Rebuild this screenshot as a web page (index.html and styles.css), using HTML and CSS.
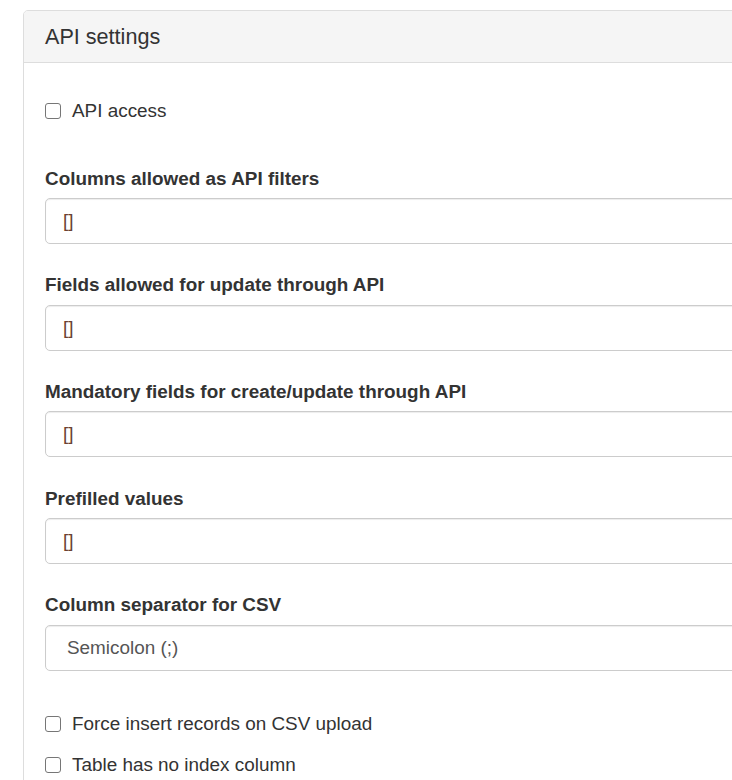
FILE: index.html
```html
<!DOCTYPE html>
<html lang="en">
<head>
<meta charset="utf-8">
<title>API settings</title>
<link rel="stylesheet" href="styles.css">
</head>
<body>
<div class="page">
  <div class="panel">
    <div class="panel-heading">
      <h3 class="panel-title">API settings</h3>
    </div>
    <div class="panel-body">
      <label class="check first-check"><input type="checkbox"> API access</label>

      <div class="form-group">
        <label class="field-label">Columns allowed as API filters</label>
        <input class="form-control code" type="text" value="[]">
      </div>
      <div class="form-group">
        <label class="field-label">Fields allowed for update through API</label>
        <input class="form-control code" type="text" value="[]">
      </div>
      <div class="form-group">
        <label class="field-label">Mandatory fields for create/update through API</label>
        <input class="form-control code" type="text" value="[]">
      </div>
      <div class="form-group">
        <label class="field-label">Prefilled values</label>
        <input class="form-control code" type="text" value="[]">
      </div>
      <div class="form-group">
        <label class="field-label">Column separator for CSV</label>
        <select class="form-control select">
          <option>Semicolon (;)</option>
          <option>Comma (,)</option>
        </select>
      </div>

      <label class="check after-select"><input type="checkbox"> Force insert records on CSV upload</label>
      <label class="check next-check"><input type="checkbox"> Table has no index column</label>
    </div>
  </div>
</div>
</body>
</html>
```
FILE: styles.css
```css
html, body {
  margin: 0;
  padding: 0;
  overflow: hidden;
  background: #fff;
}

body {
  font-family: "Liberation Sans", Arial, Helvetica, sans-serif;
  font-size: 18.9px;
  color: #333;
}

.page {
  padding: 10px 0 0 23px;
}

.panel {
  width: 780px;
  border: 1px solid #ddd;
  border-radius: 5px;
  background: #fff;
}

.panel-heading {
  background: #f5f5f5;
  border-bottom: 1px solid #ddd;
  border-radius: 4px 4px 0 0;
  padding: 13.5px 20px 13.5px 21px;
}

.panel-title {
  margin: 0;
  font-size: 21.6px;
  font-weight: normal;
  line-height: 24px;
  color: #333;
}

.panel-body {
  padding: 33.5px 20px 20px 21px;
}

.check {
  display: flex;
  align-items: center;
  height: 27px;
  line-height: 27px;
  font-weight: normal;
  cursor: pointer;
}

.check input {
  appearance: none;
  -webkit-appearance: none;
  width: 16px;
  height: 16px;
  margin: 1px 11px 0 0;
  border: 1px solid #767676;
  border-radius: 3px;
  background: #fff;
  flex: none;
}

.first-check {
  margin-bottom: 41px;
}

.after-select {
  margin-top: 39.5px;
}

.next-check {
  margin-top: 14px;
}

.form-group {
  margin-bottom: 27.2px;
}

.field-label {
  display: block;
  font-weight: bold;
  line-height: 27px;
  margin-bottom: 6.5px;
}

.form-control {
  display: block;
  box-sizing: border-box;
  width: 100%;
  height: 46px;
  margin: 0;
  padding: 0 16px;
  border: 1px solid #ccc;
  border-radius: 5px;
  background: #fff;
  box-shadow: inset 0 1px 1px rgba(0, 0, 0, 0.075);
  font-family: inherit;
  font-size: 18.9px;
  color: #555;
  outline: none;
}

.code {
  color: #6b4232;
  padding-left: 17px;
}

.select {
  appearance: none;
  -webkit-appearance: none;
  padding-left: 21px;
}
```
